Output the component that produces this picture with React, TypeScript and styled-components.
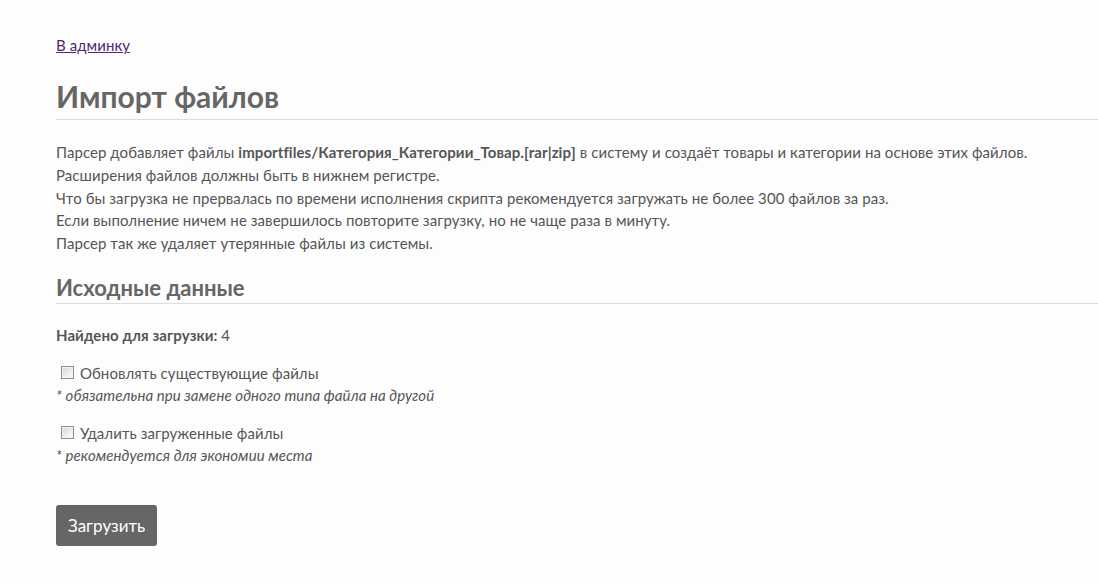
import * as React from "react";
import styled, { createGlobalStyle } from "styled-components";

const GlobalStyle = createGlobalStyle`
  html, body {
    margin: 0;
    padding: 0;
    background: #fdfdfd;
  }
  body {
    font-family: Lato, "Noto Sans", sans-serif;
    font-size: 15px;
    letter-spacing: 0.07px;
    color: #555;
  }
`;

const Page = styled.div`
  padding: 35px 0 38px 56px;
`;

const AdminLink = styled.a`
  color: #4b2a6e;
  font-size: 15px;
  text-decoration: underline;
  line-height: 20px;
`;

const Title = styled.h1`
  margin: 21px 0 0;
  padding-bottom: 3px;
  font-size: 30px;
  line-height: 40px;
  font-weight: bold;
  letter-spacing: 0;
  color: #666;
  border-bottom: 1px solid #ddd;
`;

const Intro = styled.div`
  margin-top: 21px;
  line-height: 22.75px;
`;

const Subtitle = styled.h2`
  margin: 20px 0 0;
  padding-bottom: 2px;
  font-size: 22px;
  line-height: 26px;
  font-weight: bold;
  letter-spacing: 0;
  color: #666;
  border-bottom: 1px solid #ddd;
`;

const Found = styled.div`
  margin-top: 20px;
  line-height: 22px;
`;

const Option = styled.div`
  margin-top: 16px;
  line-height: 22px;
`;

const CheckLabel = styled.label`
  display: flex;
  align-items: center;
  gap: 6px;
  padding-left: 5px;
`;

const Box = styled.input`
  appearance: none;
  margin: 0;
  width: 13px;
  height: 13px;
  border: 1px solid #8e8e8e;
  background: linear-gradient(135deg, #d4d4d4 0%, #f4f4f4 70%, #fff 100%);
  box-shadow: inset 0 0 0 1px #f2f2f2;
  cursor: pointer;

  &:checked {
    background: #fff;
    box-shadow: inset 0 0 0 2px #fff, inset 0 0 0 6px #555;
  }
`;

const Note = styled.div`
  font-style: italic;
  line-height: 22px;
`;

const Submit = styled.button`
  margin-top: 39px;
  padding: 0 12px;
  height: 41px;
  border: none;
  border-radius: 3px;
  background: #666;
  color: #fff;
  font-family: inherit;
  font-size: 17px;
  cursor: pointer;
`;

export default function App() {
  return (
    <>
      <GlobalStyle />
      <Page>
        <AdminLink href="#">В админку</AdminLink>
        <Title>Импорт файлов</Title>
        <Intro>
          Парсер добавляет файлы <b>importfiles/Категория_Категории_Товар.[rar|zip]</b> в систему и создаёт товары и категории на основе этих файлов.
          <br />
          Расширения файлов должны быть в нижнем регистре.
          <br />
          Что бы загрузка не прервалась по времени исполнения скрипта рекомендуется загружать не более 300 файлов за раз.
          <br />
          Если выполнение ничем не завершилось повторите загрузку, но не чаще раза в минуту.
          <br />
          Парсер так же удаляет утерянные файлы из системы.
        </Intro>
        <Subtitle>Исходные данные</Subtitle>
        <Found>
          <b>Найдено для загрузки:</b> 4
        </Found>
        <Option>
          <CheckLabel>
            <Box type="checkbox" />
            Обновлять существующие файлы
          </CheckLabel>
          <Note>* обязательна при замене одного типа файла на другой</Note>
        </Option>
        <Option>
          <CheckLabel>
            <Box type="checkbox" />
            Удалить загруженные файлы
          </CheckLabel>
          <Note>* рекомендуется для экономии места</Note>
        </Option>
        <Submit>Загрузить</Submit>
      </Page>
    </>
  );
}
